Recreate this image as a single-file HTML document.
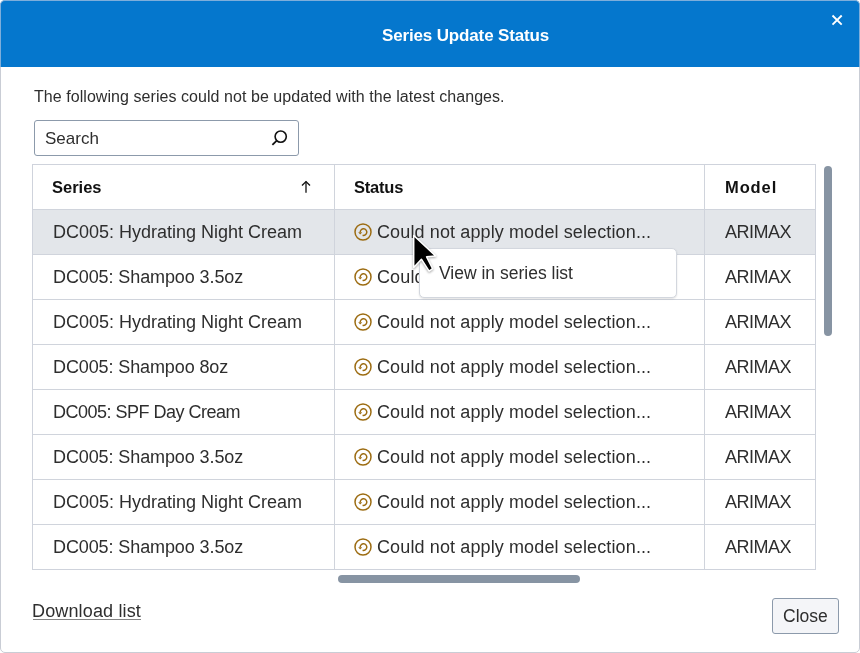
<!DOCTYPE html><html><head><meta charset="utf-8"><title>Series Update Status</title><style>
*{margin:0;padding:0;box-sizing:border-box}
html,body{width:860px;height:653px;overflow:hidden;background:#fff;font-family:"Liberation Sans",sans-serif}
#dlg{position:absolute;left:0;top:0;width:860px;height:653px;background:#fff;overflow:hidden}
#frame{position:absolute;left:0;top:0;width:860px;height:653px;border:1px solid #c9cdd5;border-radius:5px;pointer-events:none}
#hdr{position:absolute;left:0;top:0;width:860px;height:67px;background:#0577cd;border:1px solid #7eaedb;border-bottom:none;border-radius:5px 5px 0 0}
.t{position:absolute;white-space:nowrap;line-height:20px;will-change:transform}
#search{position:absolute;left:34px;top:120px;width:265px;height:36px;border:1px solid #8c9aab;border-radius:3px;background:#fff}
#tbl{position:absolute;left:32px;top:164px;width:784px;height:406px;border:1px solid #cfd3dc;background:#fff}
#sel{position:absolute;left:33px;top:210px;width:782px;height:44px;background:#e3e6ea}
.hl{position:absolute;left:33px;width:782px;height:1px;background:#d0d4dc}
.vl{position:absolute;top:165px;width:1px;height:404px;background:#d0d4dc}
#vs{position:absolute;left:824px;top:166px;width:8px;height:170px;border-radius:4px;background:#8794a3}
#hs{position:absolute;left:338px;top:575px;width:242px;height:8px;border-radius:4px;background:#8794a3}
#pop{position:absolute;left:419px;top:248px;width:258px;height:50px;border:1px solid #d3d7de;border-radius:5px;background:#fff;box-shadow:0 1px 2px rgba(0,0,0,0.12)}
#closebtn{position:absolute;left:772px;top:598px;width:67px;height:36px;border:1px solid #8c9aab;border-radius:3px;background:#f4f5f8}
</style></head><body><div id="dlg">
<div id="frame"></div>
<div id="hdr"></div>
<div class="t" style="left:382px;top:25.71px;font-size:17px;font-weight:700;color:#ffffff;letter-spacing:-0.15px;">Series Update Status</div>
<svg width="14" height="14" viewBox="0 0 14 14" style="position:absolute;left:830.3px;top:13.3px"><path d="M2.5 2.5 L11.7 11.7 M11.7 2.5 L2.5 11.7" stroke="#fff" stroke-width="1.9"/></svg>
<div class="t" style="left:34px;top:87.45px;font-size:16px;font-weight:400;color:#2e2e2e;letter-spacing:0.055px;">The following series could not be updated with the latest changes.</div>
<div id="search"></div>
<div class="t" style="left:45px;top:128.61px;font-size:17px;font-weight:400;color:#2e2e2e;letter-spacing:0px;">Search</div>
<svg width="20" height="20" viewBox="0 0 20 20" style="position:absolute;left:270px;top:127px"><circle cx="10.7" cy="9.6" r="5.6" fill="none" stroke="#111" stroke-width="1.6"/><path d="M6.7 13.6 L2.4 17.9" stroke="#111" stroke-width="1.8"/></svg>
<div id="tbl"></div>
<div id="sel"></div>
<div class="hl" style="top:209px"></div>
<div class="hl" style="top:254px"></div>
<div class="hl" style="top:299px"></div>
<div class="hl" style="top:344px"></div>
<div class="hl" style="top:389px"></div>
<div class="hl" style="top:434px"></div>
<div class="hl" style="top:479px"></div>
<div class="hl" style="top:524px"></div>
<div class="vl" style="left:334px"></div>
<div class="vl" style="left:704px"></div>
<div class="t" style="left:52px;top:177.18px;font-size:16.5px;font-weight:700;color:#111;letter-spacing:0px;">Series</div>
<div class="t" style="left:354px;top:177.18px;font-size:16.5px;font-weight:700;color:#111;letter-spacing:-0.2px;">Status</div>
<div class="t" style="left:725px;top:177.18px;font-size:16.5px;font-weight:700;color:#111;letter-spacing:0.9px;">Model</div>
<svg width="14" height="16" viewBox="0 0 14 16" style="position:absolute;left:299px;top:179px"><path d="M7 2.6 V13.7" stroke="#222" stroke-width="1.4"/><path d="M3 6.4 L7 2.6 L11 6.4" fill="none" stroke="#111" stroke-width="1.4"/></svg>
<div class="t" style="left:53px;top:221.76px;font-size:18px;font-weight:400;color:#2e2e2e;letter-spacing:0px;">DC005: Hydrating Night Cream</div>
<svg width="20" height="20" viewBox="0 0 20 20" style="position:absolute;left:353px;top:222px"><circle cx="10" cy="10" r="8" fill="none" stroke="#9c6c12" stroke-width="1.5"/><path d="M7.2 10.2 A3.3 3.3 0 1 1 9.6 13.3" fill="none" stroke="#9c6c12" stroke-width="1.5"/><path d="M5.2 10.3 L9.2 10.3 L7.2 12.6 Z" fill="#9c6c12"/></svg>
<div class="t" style="left:377px;top:221.76px;font-size:18px;font-weight:400;color:#2e2e2e;letter-spacing:0.12px;">Could not apply model selection...</div>
<div class="t" style="left:725px;top:221.76px;font-size:18px;font-weight:400;color:#2e2e2e;letter-spacing:-0.5px;">ARIMAX</div>
<div class="t" style="left:53px;top:266.76px;font-size:18px;font-weight:400;color:#2e2e2e;letter-spacing:-0.1px;">DC005: Shampoo 3.5oz</div>
<svg width="20" height="20" viewBox="0 0 20 20" style="position:absolute;left:353px;top:267px"><circle cx="10" cy="10" r="8" fill="none" stroke="#9c6c12" stroke-width="1.5"/><path d="M7.2 10.2 A3.3 3.3 0 1 1 9.6 13.3" fill="none" stroke="#9c6c12" stroke-width="1.5"/><path d="M5.2 10.3 L9.2 10.3 L7.2 12.6 Z" fill="#9c6c12"/></svg>
<div class="t" style="left:377px;top:266.76px;font-size:18px;font-weight:400;color:#2e2e2e;letter-spacing:0.12px;">Could not apply model selection...</div>
<div class="t" style="left:725px;top:266.76px;font-size:18px;font-weight:400;color:#2e2e2e;letter-spacing:-0.5px;">ARIMAX</div>
<div class="t" style="left:53px;top:311.76px;font-size:18px;font-weight:400;color:#2e2e2e;letter-spacing:0px;">DC005: Hydrating Night Cream</div>
<svg width="20" height="20" viewBox="0 0 20 20" style="position:absolute;left:353px;top:312px"><circle cx="10" cy="10" r="8" fill="none" stroke="#9c6c12" stroke-width="1.5"/><path d="M7.2 10.2 A3.3 3.3 0 1 1 9.6 13.3" fill="none" stroke="#9c6c12" stroke-width="1.5"/><path d="M5.2 10.3 L9.2 10.3 L7.2 12.6 Z" fill="#9c6c12"/></svg>
<div class="t" style="left:377px;top:311.76px;font-size:18px;font-weight:400;color:#2e2e2e;letter-spacing:0.12px;">Could not apply model selection...</div>
<div class="t" style="left:725px;top:311.76px;font-size:18px;font-weight:400;color:#2e2e2e;letter-spacing:-0.5px;">ARIMAX</div>
<div class="t" style="left:53px;top:356.76px;font-size:18px;font-weight:400;color:#2e2e2e;letter-spacing:-0.11px;">DC005: Shampoo 8oz</div>
<svg width="20" height="20" viewBox="0 0 20 20" style="position:absolute;left:353px;top:357px"><circle cx="10" cy="10" r="8" fill="none" stroke="#9c6c12" stroke-width="1.5"/><path d="M7.2 10.2 A3.3 3.3 0 1 1 9.6 13.3" fill="none" stroke="#9c6c12" stroke-width="1.5"/><path d="M5.2 10.3 L9.2 10.3 L7.2 12.6 Z" fill="#9c6c12"/></svg>
<div class="t" style="left:377px;top:356.76px;font-size:18px;font-weight:400;color:#2e2e2e;letter-spacing:0.12px;">Could not apply model selection...</div>
<div class="t" style="left:725px;top:356.76px;font-size:18px;font-weight:400;color:#2e2e2e;letter-spacing:-0.5px;">ARIMAX</div>
<div class="t" style="left:53px;top:401.76px;font-size:18px;font-weight:400;color:#2e2e2e;letter-spacing:-0.5px;">DC005: SPF Day Cream</div>
<svg width="20" height="20" viewBox="0 0 20 20" style="position:absolute;left:353px;top:402px"><circle cx="10" cy="10" r="8" fill="none" stroke="#9c6c12" stroke-width="1.5"/><path d="M7.2 10.2 A3.3 3.3 0 1 1 9.6 13.3" fill="none" stroke="#9c6c12" stroke-width="1.5"/><path d="M5.2 10.3 L9.2 10.3 L7.2 12.6 Z" fill="#9c6c12"/></svg>
<div class="t" style="left:377px;top:401.76px;font-size:18px;font-weight:400;color:#2e2e2e;letter-spacing:0.12px;">Could not apply model selection...</div>
<div class="t" style="left:725px;top:401.76px;font-size:18px;font-weight:400;color:#2e2e2e;letter-spacing:-0.5px;">ARIMAX</div>
<div class="t" style="left:53px;top:446.76px;font-size:18px;font-weight:400;color:#2e2e2e;letter-spacing:-0.1px;">DC005: Shampoo 3.5oz</div>
<svg width="20" height="20" viewBox="0 0 20 20" style="position:absolute;left:353px;top:447px"><circle cx="10" cy="10" r="8" fill="none" stroke="#9c6c12" stroke-width="1.5"/><path d="M7.2 10.2 A3.3 3.3 0 1 1 9.6 13.3" fill="none" stroke="#9c6c12" stroke-width="1.5"/><path d="M5.2 10.3 L9.2 10.3 L7.2 12.6 Z" fill="#9c6c12"/></svg>
<div class="t" style="left:377px;top:446.76px;font-size:18px;font-weight:400;color:#2e2e2e;letter-spacing:0.12px;">Could not apply model selection...</div>
<div class="t" style="left:725px;top:446.76px;font-size:18px;font-weight:400;color:#2e2e2e;letter-spacing:-0.5px;">ARIMAX</div>
<div class="t" style="left:53px;top:491.76px;font-size:18px;font-weight:400;color:#2e2e2e;letter-spacing:0px;">DC005: Hydrating Night Cream</div>
<svg width="20" height="20" viewBox="0 0 20 20" style="position:absolute;left:353px;top:492px"><circle cx="10" cy="10" r="8" fill="none" stroke="#9c6c12" stroke-width="1.5"/><path d="M7.2 10.2 A3.3 3.3 0 1 1 9.6 13.3" fill="none" stroke="#9c6c12" stroke-width="1.5"/><path d="M5.2 10.3 L9.2 10.3 L7.2 12.6 Z" fill="#9c6c12"/></svg>
<div class="t" style="left:377px;top:491.76px;font-size:18px;font-weight:400;color:#2e2e2e;letter-spacing:0.12px;">Could not apply model selection...</div>
<div class="t" style="left:725px;top:491.76px;font-size:18px;font-weight:400;color:#2e2e2e;letter-spacing:-0.5px;">ARIMAX</div>
<div class="t" style="left:53px;top:536.76px;font-size:18px;font-weight:400;color:#2e2e2e;letter-spacing:-0.1px;">DC005: Shampoo 3.5oz</div>
<svg width="20" height="20" viewBox="0 0 20 20" style="position:absolute;left:353px;top:537px"><circle cx="10" cy="10" r="8" fill="none" stroke="#9c6c12" stroke-width="1.5"/><path d="M7.2 10.2 A3.3 3.3 0 1 1 9.6 13.3" fill="none" stroke="#9c6c12" stroke-width="1.5"/><path d="M5.2 10.3 L9.2 10.3 L7.2 12.6 Z" fill="#9c6c12"/></svg>
<div class="t" style="left:377px;top:536.76px;font-size:18px;font-weight:400;color:#2e2e2e;letter-spacing:0.12px;">Could not apply model selection...</div>
<div class="t" style="left:725px;top:536.76px;font-size:18px;font-weight:400;color:#2e2e2e;letter-spacing:-0.5px;">ARIMAX</div>
<div id="vs"></div>
<div id="hs"></div>
<div id="pop"></div>
<div class="t" style="left:439px;top:263.43px;font-size:17.5px;font-weight:400;color:#2e2e2e;letter-spacing:0px;">View in series list</div>
<div class="t" style="left:31.5px;top:600.66px;font-size:18px;font-weight:400;color:#2e2e2e;letter-spacing:0.15px;">Download list</div>
<div style="position:absolute;left:33px;top:619px;width:108px;height:1px;background:#858585"></div>
<div id="closebtn"></div>
<div class="t" style="left:782.5px;top:605.83px;font-size:17.5px;font-weight:400;color:#2e2e2e;letter-spacing:0px;">Close</div>
<svg width="30" height="44" viewBox="0 0 30 44" style="position:absolute;left:410px;top:231px;filter:drop-shadow(0.5px 1px 1px rgba(0,0,0,0.35))"><path d="M3.7 4.5 L3.7 36.4 L11.4 28.2 L19.1 40.2 L22.6 37.6 L16.6 25.8 L25.6 24.9 Z" fill="#000" stroke="#fff" stroke-width="1.5" stroke-linejoin="round"/></svg>
</div></body></html>
